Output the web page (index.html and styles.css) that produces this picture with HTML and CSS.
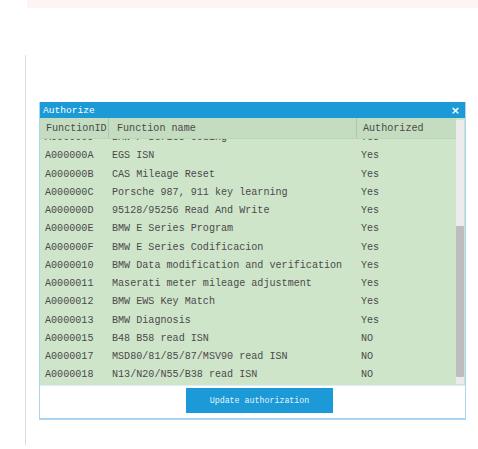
FILE: index.html
```html
<!DOCTYPE html>
<html lang="en">
<head>
  <meta charset="UTF-8" />
  <title>Authorize</title>
  <link rel="stylesheet" href="styles.css">
</head>
<body>
  <div class="top-strip"></div>
  <div class="panel">
    <div class="dialog">
      <div class="title-bar">
        <span>Authorize</span>
        <span class="close">&times;</span>
      </div>
      <div class="grid-area">
        <div class="grid">
          <div class="row head">
            <div class="c-id">FunctionID</div>
            <div class="c-name">Function name</div>
            <div class="c-auth">Authorized</div>
          </div>
          <div class="rows">
            <div class="rows-inner">
              <div class="row"><div class="c-id">A0000009</div><div class="c-name">BMW F Series Coding</div><div class="c-auth">Yes</div></div>
              <div class="row"><div class="c-id">A000000A</div><div class="c-name">EGS ISN</div><div class="c-auth">Yes</div></div>
              <div class="row"><div class="c-id">A000000B</div><div class="c-name">CAS Mileage Reset</div><div class="c-auth">Yes</div></div>
              <div class="row"><div class="c-id">A000000C</div><div class="c-name">Porsche 987, 911 key learning</div><div class="c-auth">Yes</div></div>
              <div class="row"><div class="c-id">A000000D</div><div class="c-name">95128/95256 Read And Write</div><div class="c-auth">Yes</div></div>
              <div class="row"><div class="c-id">A000000E</div><div class="c-name">BMW E Series Program</div><div class="c-auth">Yes</div></div>
              <div class="row"><div class="c-id">A000000F</div><div class="c-name">BMW E Series Codificacion</div><div class="c-auth">Yes</div></div>
              <div class="row"><div class="c-id">A0000010</div><div class="c-name">BMW Data modification and verification</div><div class="c-auth">Yes</div></div>
              <div class="row"><div class="c-id">A0000011</div><div class="c-name">Maserati meter mileage adjustment</div><div class="c-auth">Yes</div></div>
              <div class="row"><div class="c-id">A0000012</div><div class="c-name">BMW EWS Key Match</div><div class="c-auth">Yes</div></div>
              <div class="row"><div class="c-id">A0000013</div><div class="c-name">BMW Diagnosis</div><div class="c-auth">Yes</div></div>
              <div class="row"><div class="c-id">A0000015</div><div class="c-name">B48 B58 read ISN</div><div class="c-auth">NO</div></div>
              <div class="row"><div class="c-id">A0000017</div><div class="c-name">MSD80/81/85/87/MSV90 read ISN</div><div class="c-auth">NO</div></div>
              <div class="row"><div class="c-id">A0000018</div><div class="c-name">N13/N20/N55/B38 read ISN</div><div class="c-auth">NO</div></div>
            </div>
          </div>
        </div>
        <div class="scrollbar">
          <div class="arrow up"></div>
          <div class="thumb"></div>
          <div class="arrow down"></div>
        </div>
      </div>
      <div class="footer">
        <button class="update-btn">Update authorization</button>
      </div>
    </div>
  </div>
</body>
</html>
```

FILE: styles.css
```css
* {
  margin: 0;
  padding: 0;
  box-sizing: border-box;
}
body {
  background: #fff;
  font-family: 'Liberation Mono', 'Courier New', monospace;
  color: #4a4a4a;
}
.top-strip {
  height: 8px;
  margin-left: 27px;
  background: #fdf4f4;
}
.panel {
  margin-top: 47px;
  margin-left: 25px;
  height: 390px;
  border-left: 1px solid #dcdcdc;
  padding-top: 47px;
  padding-left: 13px;
}
.dialog {
  width: 427px;
  border: 1px solid #a9d6ee;
  border-top: none;
  background: #fff;
}
.title-bar {
  height: 16px;
  background: #1c9ad8;
  color: #fff;
  font-size: 9.6px;
  display: flex;
  align-items: center;
  justify-content: space-between;
  padding: 0 5px 0 3px;
}
.close {
  font-family: 'DejaVu Sans', sans-serif;
  font-size: 11px;
  font-weight: bold;
}
.grid-area {
  display: flex;
  height: 267px;
  background: #cfe5ca;
}
.grid {
  flex: 1;
  display: flex;
  flex-direction: column;
}
.row {
  display: flex;
  height: 18.25px;
  align-items: center;
  font-size: 10.1px;
  white-space: nowrap;
}
.row.head {
  height: 21px;
  flex: none;
  background: #c4dcc0;
  border-bottom: 1px solid #bcd3b8;
}
.c-id {
  width: 69px;
  padding-left: 5px;
}
.c-name {
  width: 248px;
  padding-left: 3px;
}
.c-auth {
  flex: 1;
  padding-left: 4px;
}
.head .c-id {
  padding-left: 6px;
  border-right: 1px solid #aec7aa;
  height: 100%;
  display: flex;
  align-items: center;
}
.head .c-name {
  padding-left: 8px;
  border-right: 1px solid #aec7aa;
  height: 100%;
  display: flex;
  align-items: center;
}
.head .c-auth {
  padding-left: 6px;
}
.rows {
  flex: 1;
  overflow: hidden;
}
.rows-inner {
  margin-top: -10.4px;
}
.scrollbar {
  width: 8px;
  margin: 2px 1px 1px 0;
  background: #ececec;
  display: flex;
  flex-direction: column;
}
.arrow {
  height: 6px;
  flex: none;
}
.arrow.up {
  margin-top: 1px;
}
.thumb {
  margin-top: auto;
  height: 151px;
  background: #bdbdbd;
  border-radius: 1px;
}
.arrow.down {
  margin-bottom: 1px;
}
.footer {
  height: 34px;
  border-top: 1px solid #dbeef7;
  padding-top: 2px;
  padding-left: 146px;
  border-bottom: 1px solid #a9d6ee;
}
.update-btn {
  width: 147px;
  height: 25px;
  background: #1c9ad8;
  color: #e6f4fb;
  border: none;
  font-family: 'Liberation Mono', 'Courier New', monospace;
  font-size: 8.3px;
}
```
